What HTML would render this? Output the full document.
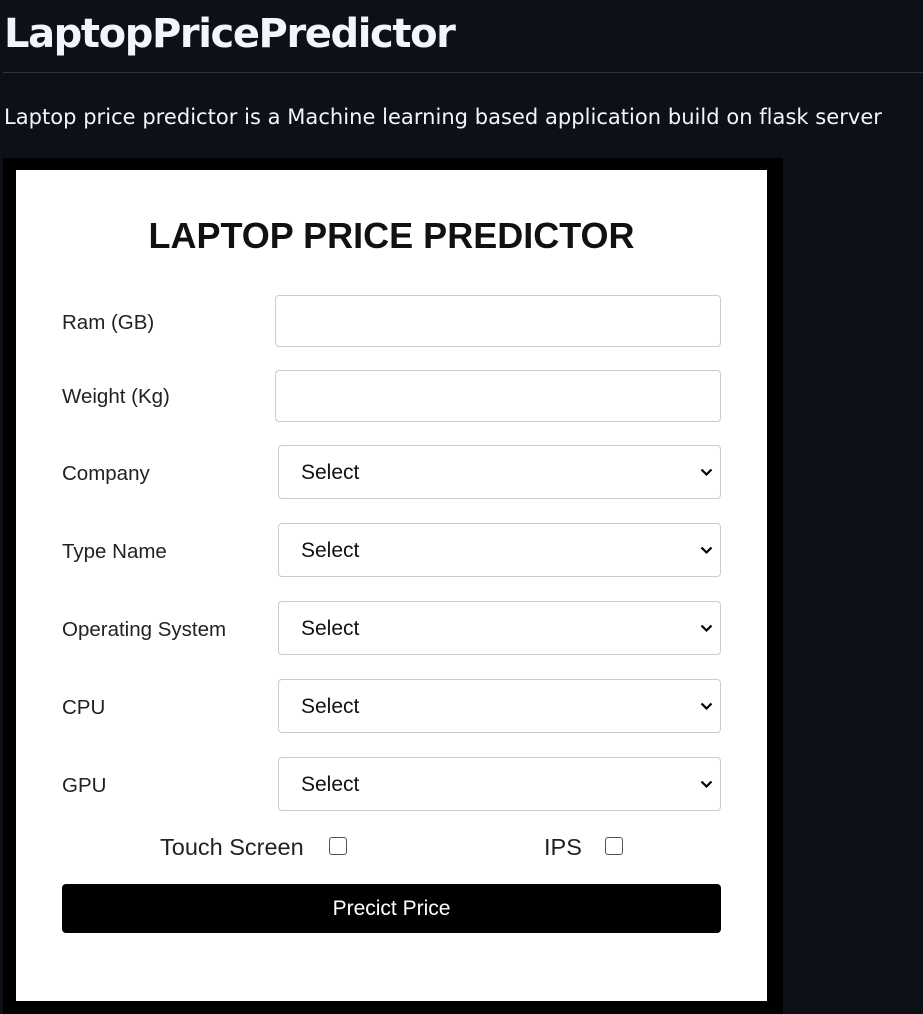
<!DOCTYPE html>
<html><head><style>
body{margin:0;background:#0d1117;width:923px;height:1014px;overflow:hidden;position:relative;font-family:"Liberation Sans",sans-serif}
.a{position:absolute}
h1{position:absolute;left:4px;top:8px;margin:0;font-size:40px;font-weight:bold;color:#f0f6fc;font-family:"DejaVu Sans","Liberation Sans",sans-serif;letter-spacing:-1.4px;line-height:52px}
.hr{left:3px;top:72px;width:920px;height:1px;background:#30363d}
.p{left:4px;top:105px;color:#f0f6fc;font-size:21px;font-family:"DejaVu Sans","Liberation Sans",sans-serif;letter-spacing:0.03px}
.blk{left:3px;top:158px;width:780px;height:856px;background:#000}
.wh{left:16px;top:170px;width:751px;height:831px;background:#fff}
.t{left:16px;width:751px;top:215px;text-align:center;font-size:36px;font-weight:bold;color:#111}
.l{left:62px;font-size:20.5px;color:#222}
.in{left:275px;width:444px;height:50px;border:1px solid #ccc;border-radius:4px;background:#fff}
.sel{left:278px;width:443px;height:54px;border:1px solid #ccc;border-radius:4px;background:#fff;font-size:21px;color:#111;box-sizing:border-box;padding:15px 0 0 22px}
.sel svg{position:absolute;right:7px;top:22px}
.cb{width:18px;height:18px;border:1.5px solid #555;border-radius:3px;box-sizing:border-box}
.btn{left:62px;top:884px;width:659px;height:49px;background:#000;border-radius:4px;color:#fff;font-size:21px;text-align:center;line-height:49px}
</style></head><body>
<h1>LaptopPricePredictor</h1>
<div class="a hr"></div>
<div class="a p">Laptop price predictor is a Machine learning based application build on flask server</div>
<div class="a blk"></div>
<div class="a wh"></div>
<div class="a t">LAPTOP PRICE PREDICTOR</div>
<div class="a l" style="top:311px">Ram (GB)</div>
<div class="a in" style="top:295px"></div>
<div class="a l" style="top:385px">Weight (Kg)</div>
<div class="a in" style="top:370px"></div>
<div class="a l" style="top:462px">Company</div>
<div class="a sel" style="top:445px">Select<svg width="13" height="9" viewBox="0 0 13 9"><path d="M1.5 1.5l5 5 5-5" stroke="#000" stroke-width="2.2" fill="none"/></svg></div>
<div class="a l" style="top:540px">Type Name</div>
<div class="a sel" style="top:523px">Select<svg width="13" height="9" viewBox="0 0 13 9"><path d="M1.5 1.5l5 5 5-5" stroke="#000" stroke-width="2.2" fill="none"/></svg></div>
<div class="a l" style="top:618px">Operating System</div>
<div class="a sel" style="top:601px">Select<svg width="13" height="9" viewBox="0 0 13 9"><path d="M1.5 1.5l5 5 5-5" stroke="#000" stroke-width="2.2" fill="none"/></svg></div>
<div class="a l" style="top:696px">CPU</div>
<div class="a sel" style="top:679px">Select<svg width="13" height="9" viewBox="0 0 13 9"><path d="M1.5 1.5l5 5 5-5" stroke="#000" stroke-width="2.2" fill="none"/></svg></div>
<div class="a l" style="top:774px">GPU</div>
<div class="a sel" style="top:757px">Select<svg width="13" height="9" viewBox="0 0 13 9"><path d="M1.5 1.5l5 5 5-5" stroke="#000" stroke-width="2.2" fill="none"/></svg></div>
<div class="a" style="left:160px;top:834px;font-size:23.5px;color:#222">Touch Screen</div>
<div class="a cb" style="left:329px;top:837px"></div>
<div class="a" style="left:544px;top:834px;font-size:23.5px;color:#222">IPS</div>
<div class="a cb" style="left:605px;top:837px"></div>
<div class="a btn">Precict Price</div>
</body></html>
